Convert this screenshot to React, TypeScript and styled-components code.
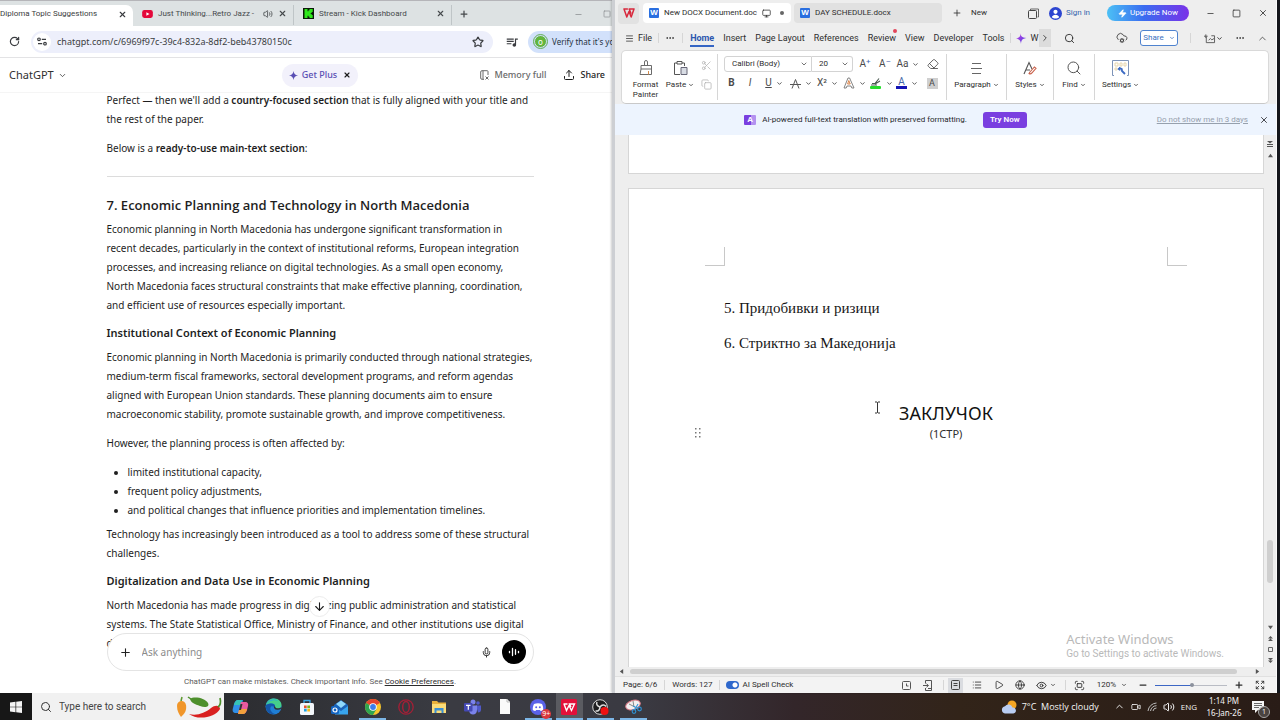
import React from "react";
import styled, { createGlobalStyle, css } from "styled-components";
import { MdQueueMusic } from "react-icons/md";
import {
  RotateCw, X, Plus, Star, Volume2, Minus, Square, ChevronDown, ChevronRight, ChevronUp,
  Upload, Mic, ArrowDown, Menu, Search, Monitor, Scissors, Copy, Eraser, Play, Globe, Eye, List,
  Fullscreen, Expand, Ellipsis, CloudCog, Zap, Video,
} from "lucide-react";

const Global = createGlobalStyle`
  *, *::before, *::after { box-sizing: border-box; }
  body { margin: 0; font: 10px/14px "Noto Sans", "Open Sans", sans-serif; color: #1c1c1c; background: #14161b; }
  button, input, select { font: inherit; color: inherit; margin: 0; padding: 0; border: 0; background: none; }
  button { display: inline-flex; align-items: center; justify-content: center; flex: none; white-space: nowrap; }
  p, h1, h2, h3, ul { margin: 0; padding: 0; }
  svg { display: block; flex: none; }
`;

const Screen = styled.div`
  display: flex;
  flex-direction: column;
  height: 100vh;
  overflow: hidden;
`;
const Workspace = styled.div`
  display: flex;
  flex: 1;
  min-height: 0;
`;

/* ---------- browser ---------- */
const Browser = styled.section`
  display: flex;
  flex-direction: column;
  flex: 0 0 50%;
  min-width: 0;
  background: #fff;
`;
const TabStrip = styled.div`
  display: flex;
  align-items: stretch;
  height: 26px;
  padding-top: 4px;
  background: #dde2e3;
  border-top: 1px solid #b5b5b9;
  color: #46494c;
`;
const BrowserTab = styled.div<{ $width: number; $active?: boolean }>`
  display: flex;
  align-items: center;
  gap: 5px;
  width: ${(p) => p.$width}px;
  padding: 0 6px 3px ${(p) => (p.$active ? 0 : 9)}px;
  ${(p) =>
    p.$active
      ? css`background: #fff; border-radius: 0 7px 0 0; color: #3a3c40;`
      : css`border-right: 1px solid #bfc5c7; height: 20px; align-self: flex-start;`}
`;
const TabTitle = styled.span`
  flex: 1;
  font-family: Roboto, sans-serif;
  font-size: 8px;
  white-space: nowrap;
`;
const WindowButtons = styled.div`
  display: flex;
  gap: 20px;
  align-items: center;
  margin-left: auto;
  padding: 0 29px 3px 0;
  color: #8a8d90;
`;
const StripButton = styled.button`
  width: 24px;
  padding-bottom: 3px;
`;
const Toolbar = styled.div`
  display: flex;
  align-items: center;
  height: 32px;
  padding-left: 9px;
  border-bottom: 1px solid #e3e3e5;
  color: #3b3d41;
`;
const Omnibox = styled.label`
  display: flex;
  align-items: center;
  gap: 6px;
  flex: 1;
  height: 22px;
  margin: 0 12px 0 11px;
  padding: 0 9px 0 2px;
  border-radius: 11px;
  background: #edeffb;
  font-size: 9px;
  input { flex: 1; min-width: 0; outline: 0; }
`;
const SiteInfo = styled.span`
  display: grid;
  place-items: center;
  width: 18px;
  height: 18px;
  border-radius: 50%;
  background: #fff;
`;
const Verify = styled.button`
  justify-content: flex-start;
  gap: 5px;
  width: 112px;
  height: 22px;
  margin-left: 9px;
  padding-left: 6px;
  border-radius: 11px 0 0 11px;
  background: #d2e1fb;
  font-size: 8px;
  color: #26313f;
`;
const Avatar = styled.span`
  display: grid;
  place-items: center;
  width: 13px;
  height: 13px;
  border: 1px solid #d2e1fb;
  outline: 1px solid #62ae57;
  border-radius: 50%;
  background: #62b53d;
  color: #fff;
  font-size: 8px;
  line-height: 8px;
`;

const ChatHeader = styled.header`
  display: grid;
  grid-template-columns: 1fr auto 1fr;
  align-items: center;
  height: 35px;
  padding: 0 9px;
  border-bottom: 1px solid #f5f5f5;
`;
const ModelButton = styled.button`
  gap: 4px;
  font-size: 11px;
  color: #303030;
`;
const HeaderSide = styled.div<{ $end?: boolean }>`
  display: flex;
  justify-content: ${(p) => (p.$end ? "flex-end" : "flex-start")};
  padding-right: ${(p) => (p.$end ? 26 : 0)}px;
  gap: 17px;
`;
const PlusPill = styled.button`
  gap: 4px;
  height: 23px;
  padding: 0 7px;
  border-radius: 12px;
  background: #f2f1fb;
  color: #5a4fb4;
  font-size: 9px;
  font-weight: 500;
  svg:last-child { color: #1d1d1d; margin-left: 2px; }
`;
const HeaderAction = styled.button<{ $strong?: boolean }>`
  gap: 5px;
  font-size: 9px;
  font-weight: 500;
  color: ${(p) => (p.$strong ? "#1c1c1c" : "#6a6a6a")};
`;

const Conversation = styled.main`
  position: relative;
  flex: 1;
  min-height: 0;
  overflow: hidden;
`;
const Article = styled.article`
  width: 427px;
  margin: -2px auto 0;
  line-height: 19px;
  color: #1e1e1e;
  p { white-space: nowrap; }
  b { font-weight: 600; }
`;
const Para = styled.p<{ $gap?: number }>`
  margin-bottom: ${(p) => p.$gap ?? 10}px;
`;
const Rule = styled.hr`
  margin: 18px 0;
  border: 0;
  border-top: 1px solid #dcdcdc;
`;
const Heading = styled.h2`
  font-family: "Open Sans", sans-serif;
  font-size: 13px;
  line-height: 20px;
  font-weight: 600;
  margin-bottom: 5px;
`;
const SubHeading = styled.h3`
  font-size: 11px;
  line-height: 20px;
  font-weight: 600;
  margin-bottom: 5px;
`;
const Bullets = styled.ul`
  padding-left: 21px;
  margin-bottom: 5px;
`;
const ScrollDown = styled.button`
  position: absolute;
  left: 50%;
  bottom: 32px;
  width: 21px;
  height: 21px;
  margin-left: -11px;
  border-radius: 50%;
  border: 1px solid #ececec;
  background: #fff;
`;
const Dock = styled.footer`
  position: relative;
  display: flex;
  flex-direction: column;
  align-items: center;
  margin-top: -16px;
  background: linear-gradient(transparent 16px, #fff 16px);
  font-family: Roboto, sans-serif;
  font-size: 8px;
  color: #5c5c5c;
  a { color: #2b2b2b; }
  p { padding: 4px 0; }
`;
const Composer = styled.label`
  display: flex;
  align-items: center;
  gap: 10px;
  width: 427px;
  height: 38px;
  padding: 0 7px 0 11px;
  border: 1px solid #e4e4e4;
  border-radius: 19px;
  background: #fff;
  color: #222;
  font-family: "Noto Sans", sans-serif;
  font-size: 10px;
  input { flex: 1; min-width: 0; outline: 0; }
  input::placeholder { color: #8b8b8b; opacity: 1; }
`;
const VoiceButton = styled.button`
  width: 24px;
  height: 24px;
  border-radius: 50%;
  background: #000;
  color: #fff;
`;

/* ---------- word processor ---------- */
const Writer = styled.section`
  position: relative;
  display: flex;
  flex-direction: column;
  flex: 1;
  min-width: 0;
  margin: 0 3px 0 -28px;
  background: #eeeeee;
  border-left: 3px solid #cdcfd3;
  border-right: 1px solid #fafafa;
  box-shadow: -1px 0 2px #0003;
  font-family: Roboto, sans-serif;
  font-size: 8px;
  color: #2e2e2e;
`;
const TitleBar = styled.div`
  display: flex;
  align-items: center;
  height: 26px;
  padding: 0 8px 0 3px;
`;
const LogoTab = styled.button`
  width: 21px;
  height: 21px;
  margin-right: 4px;
  border-radius: 4px;
  background: #e2e2e2;
`;
const DocTab = styled.button<{ $active?: boolean }>`
  justify-content: flex-start;
  gap: 5px;
  width: 148px;
  height: 20px;
  margin-right: 3px;
  padding: 0 8px 0 6px;
  border-radius: 4px;
  background: ${(p) => (p.$active ? "#fff" : "#e1e1e1")};
  svg { margin-left: auto; }
`;
const Dot = styled.i`
  flex: none;
  width: 4px;
  height: 4px;
  margin-left: 4px;
  border-radius: 50%;
  background: #666;
`;
const NewButton = styled.button`
  gap: 9px;
  margin-left: 7px;
`;
const WordMark = styled.i`
  display: grid;
  place-items: center;
  flex: none;
  width: 10px;
  height: 10px;
  border-radius: 1px;
  background: #2a6fe0;
  color: #fff;
  font: bold 8px/10px "Liberation Sans", sans-serif;
`;
const Push = styled.div<{ $gap: number }>`
  display: flex;
  align-items: center;
  gap: ${(p) => p.$gap}px;
  margin-left: auto;
`;
const SignIn = styled.button`
  gap: 4px;
  color: #3565ad;
`;
const Upgrade = styled.button`
  gap: 3px;
  width: 82px;
  height: 16px;
  border-radius: 8px;
  background: linear-gradient(90deg, #4cc0f5, #3a6cf0 45%, #7a32e8);
  color: #fff;
`;
const MenuBar = styled.nav`
  display: flex;
  align-items: center;
  height: 24px;
  padding: 0 8px 0 10px;
  font-size: 9px;
`;
const MenuItem = styled.button<{ $active?: boolean; $lead?: number }>`
  position: relative;
  height: 17px;
  margin-left: ${(p) => p.$lead ?? 9}px;
  gap: 4px;
  ${(p) =>
    p.$active &&
    css`
      color: #2c57ae;
      font-weight: 700;
      box-shadow: inset 0 -2px #3565c4;
    `}
`;
const Notice = styled.i`
  position: absolute;
  top: -1px;
  right: -1px;
  width: 4px;
  height: 4px;
  border-radius: 50%;
  background: #e2455a;
`;
const Divider = styled.i<{ $h?: number; $m?: number }>`
  flex: none;
  width: 1px;
  height: ${(p) => p.$h ?? 10}px;
  margin: 0 ${(p) => p.$m ?? 0}px;
  background: #d6d6d6;
`;
const MoreTabs = styled.button`
  width: 12px;
  height: 18px;
  margin-right: 13px;
  background: #dcdcdc;
`;
const ShareButton = styled.button`
  gap: 5px;
  width: 38px;
  height: 16px;
  border: 1px solid #4f83cf;
  border-radius: 3px;
  background: #fff;
  color: #3b71c0;
  font-size: 8px;
`;
const Ribbon = styled.div`
  display: flex;
  height: 54px;
  margin: 0 7px 0 6px;
  padding: 3px 4px;
  border: 1px solid #d9d9d9;
  border-bottom-color: #c9c9c9;
  border-radius: 5px;
  background: #fff;
`;
const BigTool = styled.button<{ $w: number }>`
  flex-direction: column;
  justify-content: flex-start;
  width: ${(p) => p.$w}px;
  padding-top: 6px;
  gap: 4px;
  line-height: 10px;
  span { display: flex; align-items: center; gap: 2px; }
`;
const ToolStack = styled.div`
  display: flex;
  flex-direction: column;
  gap: 8px;
  width: 22px;
  padding: 6px 3px 0;
  color: #b0b0b0;
`;
const FontGroup = styled.div`
  display: flex;
  flex-direction: column;
  gap: 3px;
  padding: 2px 0 0 6px;
  width: 228px;
`;
const ToolRow = styled.div`
  display: flex;
  align-items: center;
  height: 16px;
`;
const Picker = styled.label<{ $w: number; $last?: boolean }>`
  display: flex;
  align-items: center;
  width: ${(p) => p.$w}px;
  height: 16px;
  padding: 0 3px 0 7px;
  border: 1px solid #d3d3d3;
  ${(p) => (p.$last ? css`border-left: 0; border-radius: 0 3px 3px 0; margin-right: 2px;` : css`border-radius: 3px 0 0 3px;`)}
  font-size: 8px;
  select { flex: 1; min-width: 0; appearance: none; outline: 0; }
`;
const Tool = styled.button<{ $w: number; $tight?: boolean }>`
  gap: ${(p) => (p.$tight ? 0 : 4)}px;
  width: ${(p) => p.$w}px;
  font-size: 10px;
  line-height: 12px;
  color: #4a4a4a;
  sup { align-self: flex-start; font-size: 8px; line-height: 8px; color: #3f66b0; }
`;
const Inked = styled.span<{ $ink: string }>`
  display: grid;
  place-items: center;
  width: 11px;
  height: 12px;
  line-height: 8px;
  border-bottom: 3px solid ${(p) => p.$ink};
  color: #4667a8;
`;
const Shade = styled.span`
  width: 11px;
  height: 11px;
  line-height: 11px;
  font-size: 9px;
  background: #cfcfcf;
`;
const Banner = styled.div`
  display: flex;
  align-items: center;
  justify-content: center;
  position: relative;
  height: 31px;
  padding-right: 120px;
  background: #edf4fe;
  font-size: 8px;
  color: #26282c;
`;
const TryNow = styled.button`
  width: 44px;
  height: 16px;
  margin-left: 16px;
  border-radius: 3px;
  background: #7a3fe0;
  color: #fff;
  font-weight: 600;
`;
const BannerEnd = styled.div`
  position: absolute;
  right: 7px;
  display: flex;
  align-items: center;
  gap: 11px;
  a { color: #96a0ad; }
`;
const AiMark = styled.i`
  display: grid;
  place-items: center;
  width: 12px;
  height: 10px;
  margin-right: 6px;
  border-radius: 1px;
  background: linear-gradient(90deg, #7a3fe0 60%, #b392f0 60%);
  color: #fff;
  font: bold 8px/10px "Liberation Sans", sans-serif;
`;
const DocArea = styled.div`
  display: flex;
  flex: 1;
  min-height: 0;
`;
const Pages = styled.div`
  position: relative;
  display: flex;
  flex-direction: column;
  gap: 14px;
  flex: 1;
  min-width: 0;
  padding-left: 13px;
`;
const Sheet = styled.div<{ $tail?: boolean }>`
  position: relative;
  background: #fff;
  border: 1px solid #d6d6d6;
  font-family: "Noto Sans", sans-serif;
  ${(p) => (p.$tail ? css`height: 39px; border-top: 0;` : css`flex: 1; border-bottom: 0;`)}
`;
const Corners = styled.div`
  display: flex;
  justify-content: space-between;
  padding: 58px 76px 0;
`;
const Corner = styled.i<{ $side: "left" | "right" }>`
  width: 20px;
  height: 19px;
  border-bottom: 1px solid #c8c8c8;
  border-${(p) => (p.$side === "left" ? "right" : "left")}: 1px solid #c8c8c8;
`;
const DocLine = styled.p`
  padding-left: 95px;
  margin-bottom: 15px;
  font: 15px/20px "Liberation Serif", serif;
  color: #161616;
`;
const DocText = styled.div`
  padding-top: 32px;
`;
const DocTitle = styled.h1`
  margin-top: 46px;
  text-align: center;
  font-size: 18px;
  font-weight: 400;
  line-height: 28px;
  color: #111;
`;
const DocNote = styled.p`
  position: relative;
  text-align: center;
  font-size: 11px;
  line-height: 14px;
`;
const Handle = styled.span`
  position: absolute;
  left: 65px;
  top: 1px;
`;
const Caret = styled.span`
  position: absolute;
  left: 245px;
  top: 212px;
`;
const Watermark = styled.div`
  position: absolute;
  right: 40px;
  bottom: 6px;
  color: #b9b9b9;
  font-size: 10px;
  line-height: 14px;
  strong { display: block; font: 400 13px/16px "Noto Sans", sans-serif; }
`;
const Rail = styled.div`
  display: flex;
  flex-direction: column;
  align-items: center;
  justify-content: space-between;
  width: 12px;
  padding: 6px 0 4px;
  color: #555;
`;
const RailGroup = styled.div`
  display: flex;
  flex-direction: column;
  align-items: center;
  gap: 6px;
`;
const Thumb = styled.i`
  width: 6px;
  height: 43px;
  margin-bottom: 36px;
  border-radius: 3px;
  background: #cfcfcf;
`;
const HScroll = styled.div`
  display: flex;
  align-items: center;
  gap: 6px;
  height: 10px;
  padding: 0 16px 0 4px;
  border-bottom: 1px solid #e0e0e0;
  color: #555;
`;
const HThumb = styled.i`
  flex: 1;
  height: 5px;
  margin-right: 12px;
  border-radius: 3px;
  background: #cfcfcf;
`;
const StatusBar = styled.footer`
  display: flex;
  align-items: center;
  height: 16px;
  padding-left: 8px;
  background: #f3f3f3;
  font-size: 8px;
`;
const Switch = styled.label`
  display: flex;
  align-items: center;
  gap: 4px;
  input {
    appearance: none;
    width: 13px;
    height: 8px;
    border-radius: 4px;
    background: radial-gradient(circle at 9px 4px, #fff 2px, transparent 3px), #2f68cc;
  }
`;
const ViewButton = styled.button<{ $on?: boolean; $w?: number }>`
  gap: 3px;
  width: ${(p) => p.$w ?? 22}px;
  height: 15px;
  background: ${(p) => (p.$on ? "#dadce0" : "none")};
`;
const ZoomRange = styled.input`
  appearance: none;
  width: 72px;
  height: 10px;
  margin: 0 7px;
  background: linear-gradient(90deg, #3c66c4 52%, #b9bcc4 52%) center / 100% 1px no-repeat;
  &::-webkit-slider-thumb { appearance: none; width: 4px; height: 4px; border-radius: 50%; background: #8c919c; }
`;

/* ---------- taskbar ---------- */
const Taskbar = styled.footer`
  display: flex;
  align-items: stretch;
  height: 27px;
  background: linear-gradient(90deg, #1d1d1f 0, #2c2d31 18%, #3a3b42 35%, #3a3a42 50%, #33262a 62%, #322419 75%, #291c17 100%);
  color: #f4f4f4;
`;
const Start = styled.button`
  width: 32px;
  background: #171717;
`;
const SearchBox = styled.label`
  display: flex;
  align-items: center;
  gap: 7px;
  width: 192px;
  padding: 0 1px 0 8px;
  background: #f1f1f1;
  color: #333;
  font-family: Roboto, sans-serif;
  font-size: 10px;
  input { flex: 1; min-width: 0; outline: 0; }
  input::placeholder { color: #444; opacity: 1; }
`;
const Apps = styled.div`
  display: flex;
  width: 426px;
`;
const AppButton = styled.button<{ $open?: boolean; $active?: boolean }>`
  flex: 1 1 0;
  border-top: 2px solid transparent;
  border-bottom: 2px solid ${(p) => (p.$open || p.$active ? "#7cb6e6" : "transparent")};
  background: ${(p) => (p.$active ? "#5a5b61" : "none")};
  margin: 0 ${(p) => (p.$active ? 1 : 3)}px;
`;
const Tray = styled.div`
  display: flex;
  align-items: center;
  margin-left: auto;
  padding-right: 16px;
  font-family: "Open Sans", sans-serif;
  font-size: 9px;
  line-height: 12px;
`;
const Weather = styled.button`
  gap: 5px;
  margin-right: 15px;
`;
const TrayIcons = styled.div`
  display: flex;
  align-items: center;
  gap: 6px;
  font-size: 8px;
`;
const ClockText = styled.div`
  width: 40px;
  margin: 0 8px 0 7px;
  text-align: center;
  white-space: nowrap;
  font-family: "Noto Sans", sans-serif;
  font-size: 8px;
`;
const Action = styled.span`
  position: relative;
`;
const Badge = styled.span<{ $red?: boolean }>`
  position: absolute;
  right: -5px;
  bottom: -4px;
  min-width: 10px;
  height: 10px;
  padding: 0 1px;
  border-radius: 5px;
  background: ${(p) => (p.$red ? "#d9363e" : "#4a4340")};
  outline: ${(p) => (p.$red ? 0 : 1)}px solid #aaa;
  color: #fff;
  font-size: 7px;
  line-height: 10px;
  text-align: center;
`;

const Down = ({ s = 7 }: { s?: number }) => <ChevronDown size={s} strokeWidth={3} />;

const WLogo = ({ size, color }: { size: number; color: string }) => (
  <svg width={size} height={size} viewBox="0 0 12 12" fill="none" stroke={color} strokeWidth="1.500" strokeLinejoin="round" strokeLinecap="round">
    <path d="M1 2h3.400M1 2l2.800 8L6 4.500 8.200 10 11 2H6.200l1.600 4" />
  </svg>
);
const Tri = ({ d }: { d: string }) => (
  <svg width="5" height="5" viewBox="0 0 6 6" fill="currentColor"><path d={d} /></svg>
);

const YouTube = () => (
  <svg width="11" height="8" viewBox="0 0 12 9"><rect width="12" height="9" rx="2.400" fill="#e4083a" /><path d="M4.700 2.400v4.200l3.600-2.100z" fill="#fff" /></svg>
);
const Kick = () => (
  <svg width="11" height="11" viewBox="0 0 11 11"><rect width="11" height="11" fill="#0b1a08" /><path d="M1.500 1h3v2.300h1V2.200h1V1h3.200v3h-1v1h-1v1h1v1h1v3H6.500v-1.200h-1V7.700h-1V10h-3z" fill="#2fe81c" /></svg>
);
const Tune = () => (
  <svg width="10" height="9" viewBox="0 0 10 9" fill="none" stroke="currentColor" strokeWidth="1.200"><circle cx="2" cy="2.300" r="1.300" /><path d="M4.800 2.300H9M1 6.700h4.200" /><circle cx="8" cy="6.700" r="1.300" /></svg>
);
const Sparkle = () => (
  <svg width="9" height="9" viewBox="0 0 10 10"><path d="M5 0c.5 3 1.500 4.300 5 5-3.500.7-4.500 2-5 5-.5-3-1.500-4.300-5-5 3.500-.7 4.500-2 5-5z" fill="#5a4fb4" /></svg>
);
const WandSpark = () => (
  <svg width="11" height="11" viewBox="0 0 11 11"><defs><linearGradient id="spark" x2="1" y2="1"><stop stopColor="#c246e0" /><stop offset="1" stopColor="#4a3ae6" /></linearGradient></defs><path d="M4.500 0c.3 3.200 1 4.500 6 5-4.200.6-5.300 2-5.500 6-.4-3.600-1.300-4.700-5-5.500 3.600-.7 4.500-2 4.500-5.500z" fill="url(#spark)" /></svg>
);
const Memory = () => (
  <svg width="9" height="10" viewBox="0 0 9 10" fill="none" stroke="currentColor" strokeWidth="1"><path d="M8 5V1.500a.8.8 0 0 0-.8-.8H2A1.300 1.300 0 0 0 .7 2v6A1.300 1.300 0 0 0 2 9.300h2M3 .7v8.400M5.500 6.500l3 3M8.500 6.500l-3 3" /></svg>
);
const Wave = () => (
  <svg width="12" height="12" viewBox="0 0 12 12" stroke="#fff" strokeWidth="1.300" strokeLinecap="round"><path d="M1.500 5.300v1.400M4.500 2.500v7M7.500 3.700v4.600M10.500 5.300v1.400" /></svg>
);
const Person = () => (
  <svg width="13" height="13" viewBox="0 0 13 13"><circle cx="6.500" cy="6.500" r="6.500" fill="#2d45d0" /><circle cx="6.500" cy="4.800" r="2.100" fill="#fff" /><path d="M2.800 10.200c.7-3.400 6.700-3.400 7.400 0-2 1.700-5.400 1.700-7.400 0z" fill="#fff" /></svg>
);
const TabStack = () => (
  <svg width="11" height="11" viewBox="0 0 11 11" fill="none"><path d="M2.500 2V1h8v8h-1" stroke="#666" /><rect x=".5" y="2.500" width="8" height="8" rx="1" stroke="#444" /></svg>
);
const Painter = () => (
  <svg width="14" height="16" viewBox="0 0 14 16" fill="none" stroke="#6b6b6b"><path d="M5.500 5V2a1.500 1.500 0 0 1 3 0v3M2 5.500h10.500V9H2zM2 9l-1 5.500h11.500V9" /><path d="M9.500 11v3.500" stroke="#d58b4a" /></svg>
);
const Clipboard_ = () => (
  <svg width="15" height="16" viewBox="0 0 15 16" fill="none" stroke="#555"><path d="M7 14.500H1.500V3H4M9 3h2.500v3M4 1.500h5V4H4z" /><path d="M8 7.500h6v7H8z" fill="#d8dce4" stroke="#667" /></svg>
);
const Lines = () => (
  <svg width="11" height="16" viewBox="0 0 11 16" stroke="#666"><path d="M1 3.500h9M0 8.500h11M1 13.500h9" /></svg>
);
const Styles_ = () => (
  <svg width="14" height="16" viewBox="0 0 14 16" fill="none" stroke="#555" strokeWidth="1.100"><path d="M1 14L6 2.500 9 9M2.800 10H7" /><path d="M6 13.500c1 .7 2 .5 3-.6l4-4.600-1.600-1.300-4 4.500c-.8.9-.9 1.400-1.400 2z" stroke="#c9614a" /></svg>
);
const SettingsArt = () => (
  <svg width="17" height="16" viewBox="0 0 17 16" fill="none"><path d="M2 15.500H.5V.5h16v15H15" stroke="#7d93b8" /><path d="M3 3h3v3H3zM8 3h2v3H8zM12 3h2v3h-2zM3 8h2v2H3z" stroke="#e6d6ae" /><path d="M6 8.500l1.500 1 .3-1.500 2 1 .2 2L13 14" stroke="#3d6bc4" strokeWidth="1.800" /></svg>
);
const Cam = () => (
  <svg width="13" height="11" viewBox="0 0 14 12" fill="none" stroke="#555"><path d="M3.500 4v6.500h9V3H9M1 3.500h4M3 1.500v4M6 8l2-2 1.500 1.500L12 6" /></svg>
);
const OutlineA = () => (
  <svg width="12" height="12" viewBox="0 0 12 12" fill="none"><path d="M1 11L5 1h1.600L11 11H8.800L8 9H4l-.8 2z" stroke="#777" strokeWidth=".9" /><path d="M5.800 3.500L4.600 7h2.600z" stroke="#d9834a" /></svg>
);
const Strike = () => (
  <svg width="11" height="11" viewBox="0 0 11 11" fill="none" stroke="#555"><path d="M2 10.500L5.500 1.500 9 10.500M0 6.500h11" /></svg>
);
const Marker = () => (
  <svg width="12" height="12" viewBox="0 0 12 12" fill="none"><path d="M2 6.500h3l4-5M5 7l5-3M1 8h6" stroke="#4b5a52" strokeWidth="1.100" /><rect x="0" y="9" width="11" height="3" rx="1" fill="#25dc2c" /></svg>
);
const BackupIcon = () => (
  <svg width="9" height="9" viewBox="0 0 9 9" fill="none" stroke="#555"><rect x=".5" y=".5" width="8" height="8" rx="1" /><path d="M4.500 2.500v2.500h2" /></svg>
);
const SideIcon = () => (
  <svg width="10" height="11" viewBox="0 0 10 11" fill="none" stroke="#555"><path d="M2.500 3.500v-3h6v10h-6V8M0 5.500h5M3.500 3.800l2 1.700-2 1.700M5 8.500h3" /></svg>
);
const PageIcon = () => (
  <svg width="9" height="10" viewBox="0 0 9 10" fill="none" stroke="#444"><rect x=".5" y=".5" width="8" height="9" rx="1" /><path d="M2.500 3.500h4M2.500 5.500h4" /></svg>
);
const Peppers = () => (
  <svg width="48" height="24" viewBox="0 0 48 24">
    <path d="M6 6l1-4" stroke="#5f9a30" strokeWidth="1.500" /><path d="M2 11c0-6 8-7 9-1s-2 9-5 12C4 19 2 16 2 11z" fill="#f0962a" />
    <path d="M15 4c4-3 15-1 18 4 2 4-3 5-8 3S16 8 15 4z" fill="#4d8f2c" /><path d="M16 4l-3-2" stroke="#4d8f2c" strokeWidth="1.500" />
    <path d="M14 19c8 2 16-1 22-6 5-4 9-2 9 1-4 8-22 12-31 5z" fill="#d92020" /><path d="M43 12c3-2 3-5 2-9" stroke="#4d8f2c" strokeWidth="1.700" fill="none" />
  </svg>
);

const icons: Record<string, React.ReactNode> = {
  Copilot: <svg width="17" height="16" viewBox="0 0 17 16"><path d="M6 1h5l-3 13H4c-3 0-4-2-3-5l1-4c.6-2 2-4 4-4z" fill="#2f8fe8" /><path d="M6 1h4L8.500 6H2c.7-3 2-5 4-5z" fill="#36c2b4" /><path d="M11 15H6l3-12h4c3 0 3.500 2 3 4l-1 4c-.6 2-2 4-4 4z" fill="#e85aa0" /><path d="M11 15H6l1.200-5H15c-.6 3-2 5-4 5z" fill="#f2a13c" /><path d="M8.500 5h2L9 11H7z" fill="#333" /></svg>,
  Edge: <svg width="17" height="17" viewBox="0 0 17 17"><circle cx="8.500" cy="8.500" r="8" fill="#1f7fd6" /><path d="M1 7C2 2 6 .5 9 .5c5 0 7.500 3.500 7.500 6.500S14 11 11.500 11 9.500 9 10 8.500C10.500 6 7 4 1 7z" fill="#45cf8b" /><path d="M1 7C3 2 10 0 13 3 8 1 3 4 1 7z" fill="#2aa9d8" /><path d="M1 7c6-3 9.500-1 9 1.500-1 1-3.500-1.500-4.500 1S7 15 10 16C4 17 0 13 1 7z" fill="#1557a8" /><path d="M9.700 8.500c-.4.700.3 2.500 2.300 2.500 1.500.2 3-.3 4-1" fill="none" stroke="#2e3035" strokeWidth="1.400" /></svg>,
  Store: <svg width="16" height="16" viewBox="0 0 16 16"><path d="M5 4V1.500h6V4" fill="none" stroke="#3aa7e4" strokeWidth="1.300" /><rect x="1" y="4" width="14" height="12" rx="1.500" fill="#f3f6fa" /><path d="M5 6.500h2.700v2.700H5z" fill="#e8532f" /><path d="M8.300 6.500H11v2.700H8.300z" fill="#79b51c" /><path d="M5 9.800h2.700v2.700H5z" fill="#1ba1e2" /><path d="M8.300 9.800H11v2.700H8.300z" fill="#f8b916" /></svg>,
  Outlook: <svg width="17" height="16" viewBox="0 0 17 16"><path d="M3 6l7-5 7 5v9H3z" fill="#1b62b8" /><path d="M5 5l5-3.500L15 5l-5 4z" fill="#8fd8fa" /><path d="M3 8l7 4 7-5v8.500H4z" fill="#38a5ee" /><rect y="7" width="8" height="8" rx="1.500" fill="#1464c0" /><circle cx="4" cy="11" r="2" fill="none" stroke="#fff" strokeWidth="1.200" /></svg>,
  Chrome: <svg width="16" height="16" viewBox="0 0 16 16"><circle cx="8" cy="8" r="8" fill="#f7c52c" /><path d="M8 8L1.100 4A8 8 0 0 1 14.900 4z" fill="#e4432f" /><path d="M8 8L1.100 4A8 8 0 0 0 8 16l3.500-6z" fill="#2fa550" /><circle cx="8" cy="8" r="3.800" fill="#fff" /><circle cx="8" cy="8" r="2.900" fill="#3b7ded" /></svg>,
  Opera: <svg width="16" height="16" viewBox="0 0 16 16" fill="none" stroke="#a31f36"><circle cx="8" cy="8" r="7.200" strokeWidth="1.300" /><ellipse cx="8" cy="8" rx="3.300" ry="5.500" strokeWidth="1.500" /></svg>,
  Explorer: <svg width="16" height="14" viewBox="0 0 16 14"><path d="M1 1h5l1.500 1.500H15V13H1z" fill="#e9b13c" /><path d="M1 4h14v9H1z" fill="#fbdc78" /><path d="M3.500 8h9v5h-2v-2.500h-5V13h-2z" fill="#3b8fd4" /></svg>,
  Teams: <svg width="17" height="16" viewBox="0 0 17 16"><circle cx="9" cy="3" r="2.500" fill="#7b83eb" /><circle cx="14" cy="4" r="1.800" fill="#5059c9" /><path d="M12 6.500h5v4c0 2-1 3-3 3z" fill="#5059c9" /><path d="M5 6.500h8V11c0 3-2 4.500-4 4.500S5 14 5 11z" fill="#7b83eb" /><rect y="4" width="8.500" height="8.500" rx="1" fill="#4449b4" /><path d="M2 6.300h4.500M4.300 6.300v4.500" stroke="#fff" strokeWidth="1.200" /></svg>,
  File: <svg width="12" height="15" viewBox="0 0 12 15"><path d="M1 0h7l3 3v12H1z" fill="#fafafa" /><path d="M8 0v3h3" fill="none" stroke="#bbb" /></svg>,
  Discord: <svg width="16" height="16" viewBox="0 0 16 16"><circle cx="8" cy="8" r="8" fill="#5a62e8" /><path d="M4 5c2.500-1 5.500-1 8 0 1 2 1.400 4 1.200 6-1 .7-1.700 1-2.600 1l-.7-1H6.100l-.7 1c-1 0-1.700-.3-2.600-1C2.600 9 3 7 4 5z" fill="#fff" /><circle cx="6.200" cy="8.200" r="1" fill="#5a62e8" /><circle cx="9.800" cy="8.200" r="1" fill="#5a62e8" /></svg>,
  "WPS Office": <svg width="16" height="16" viewBox="0 0 16 16"><rect width="16" height="16" rx="1.500" fill="#e2103a" /><path d="M2.500 5h4M3 5l2.500 6.500L8 6.500l2.500 5L13.500 5H8.500l1.500 3" fill="none" stroke="#fff" strokeWidth="1.400" /></svg>,
  "OBS Studio": <svg width="17" height="16" viewBox="0 0 17 16"><circle cx="8" cy="8" r="7.300" fill="#1e1e20" stroke="#d8d8d8" /><path d="M8 8c-3-1-4-3-3-5M8 8c0 3-2 4.500-4.500 4M8 8c2-2.500 4.500-2.500 6-.5" fill="none" stroke="#ddd" strokeWidth="1.500" /><circle cx="12.500" cy="12" r="4" fill="#ee1111" /></svg>,
  "Snipping Tool": <svg width="17" height="15" viewBox="0 0 17 15"><ellipse cx="8" cy="6" rx="7.500" ry="4.500" transform="rotate(-18 8 6)" fill="#f4f0f0" stroke="#d77a86" /><path d="M4 5l6 3M8 2l1 6" stroke="#888" /><circle cx="9" cy="12.500" r="1.800" fill="none" stroke="#2f8fd0" strokeWidth="1.200" /><circle cx="14.500" cy="10" r="1.800" fill="none" stroke="#2f8fd0" strokeWidth="1.200" /><path d="M9.500 11L13 5M13 9.500L8 7" stroke="#3b99d8" strokeWidth="1.200" /></svg>,
};
const openApps = ["Chrome", "Discord", "OBS Studio", "Snipping Tool"];

function BrowserWindow() {
  return (
    <Browser>
      <TabStrip>
        <BrowserTab $width={133} $active>
          <TabTitle>Diploma Topic Suggestions</TabTitle>
          <button aria-label="Close tab"><X size={9} strokeWidth={3} /></button>
        </BrowserTab>
        <BrowserTab $width={161}>
          <YouTube />
          <TabTitle>Just Thinking...Retro Jazz -</TabTitle>
          <Volume2 size={10} />
          <button aria-label="Close tab"><X size={9} strokeWidth={3} /></button>
        </BrowserTab>
        <BrowserTab $width={158}>
          <Kick />
          <TabTitle>Stream - Kick Dashboard</TabTitle>
          <button aria-label="Close tab"><X size={9} strokeWidth={3} /></button>
        </BrowserTab>
        <StripButton aria-label="New tab"><Plus size={10} strokeWidth={3} /></StripButton>
        <WindowButtons>
          <button aria-label="Minimize"><Minus size={9} /></button>
          <button aria-label="Maximize"><Square size={8} /></button>
        </WindowButtons>
      </TabStrip>
      <Toolbar>
        <button aria-label="Reload"><RotateCw size={11} strokeWidth={2.600} /></button>
        <Omnibox>
          <SiteInfo><Tune /></SiteInfo>
          <input aria-label="Address" defaultValue="chatgpt.com/c/6969f97c-39c4-832a-8df2-beb43780150c" />
          <Star size={12} strokeWidth={2.400} />
        </Omnibox>
        <button aria-label="Media controls"><MdQueueMusic size={14} /></button>
        <Verify><Avatar>o</Avatar>Verify that it's you</Verify>
      </Toolbar>
      <ChatHeader>
        <HeaderSide>
          <ModelButton>ChatGPT <ChevronDown size={9} /></ModelButton>
        </HeaderSide>
        <PlusPill><Sparkle />Get Plus <X size={8} strokeWidth={3.500} /></PlusPill>
        <HeaderSide $end>
          <HeaderAction><Memory />Memory full</HeaderAction>
          <HeaderAction $strong><Upload size={12} />Share</HeaderAction>
        </HeaderSide>
      </ChatHeader>
      <Conversation>
        <Article>
          <Para>Perfect — then we'll add a <b>country-focused section</b> that is fully aligned with your title and<br />the rest of the paper.</Para>
          <Para>Below is a <b>ready-to-use main-text section</b>:</Para>
          <Rule />
          <Heading>7. Economic Planning and Technology in North Macedonia</Heading>
          <Para $gap={8}>Economic planning in North Macedonia has undergone significant transformation in<br />recent decades, particularly in the context of institutional reforms, European integration<br />processes, and increasing reliance on digital technologies. As a small open economy,<br />North Macedonia faces structural constraints that make effective planning, coordination,<br />and efficient use of resources especially important.</Para>
          <SubHeading>Institutional Context of Economic Planning</SubHeading>
          <Para>Economic planning in North Macedonia is primarily conducted through national strategies,<br />medium-term fiscal frameworks, sectoral development programs, and reform agendas<br />aligned with European Union standards. These planning documents aim to ensure<br />macroeconomic stability, promote sustainable growth, and improve competitiveness.</Para>
          <Para>However, the planning process is often affected by:</Para>
          <Bullets>
            <li>limited institutional capacity,</li>
            <li>frequent policy adjustments,</li>
            <li>and political changes that influence priorities and implementation timelines.</li>
          </Bullets>
          <Para $gap={8}>Technology has increasingly been introduced as a tool to address some of these structural<br />challenges.</Para>
          <SubHeading>Digitalization and Data Use in Economic Planning</SubHeading>
          <Para>North Macedonia has made progress in digitalizing public administration and statistical<br />systems. The State Statistical Office, Ministry of Finance, and other institutions use digital<br />databases</Para>
        </Article>
        <ScrollDown aria-label="Scroll to bottom"><ArrowDown size={13} /></ScrollDown>
      </Conversation>
      <Dock>
        <Composer>
          <Plus size={13} />
          <input aria-label="Message" placeholder="Ask anything" />
          <Mic size={11} />
          <VoiceButton aria-label="Voice mode"><Wave /></VoiceButton>
        </Composer>
        <p>ChatGPT can make mistakes. Check important info. See <a href="#cookies">Cookie Preferences</a>.</p>
      </Dock>
    </Browser>
  );
}

function WriterWindow() {
  return (
    <Writer>
      <TitleBar>
        <LogoTab aria-label="WPS home"><WLogo size={12} color="#d8283c" /></LogoTab>
        <DocTab $active><WordMark>W</WordMark><span>New DOCX Document.doc</span><Monitor size={9} /><Dot /></DocTab>
        <DocTab><WordMark>W</WordMark><span>DAY SCHEDULE.docx</span></DocTab>
        <NewButton><Plus size={10} />New</NewButton>
        <Push $gap={17}>
          <Push $gap={10}>
            <button aria-label="Windows"><TabStack /></button>
            <SignIn><Person />Sign in</SignIn>
          </Push>
          <Upgrade><Zap size={9} fill="#fff" />Upgrade Now</Upgrade>
          <button aria-label="Minimize"><Minus size={9} /></button>
          <button aria-label="Maximize"><Square size={9} /></button>
          <button aria-label="Close"><X size={10} /></button>
        </Push>
      </TitleBar>
      <MenuBar>
        <MenuItem $lead={0}><Menu size={9} />File</MenuItem>
        <Divider $m={6} />
        <MenuItem $lead={0} aria-label="Quick access"><Ellipsis size={10} /></MenuItem>
        <Divider $m={7} />
        <MenuItem $active $lead={0}>Home</MenuItem>
        <MenuItem>Insert</MenuItem>
        <MenuItem>Page Layout</MenuItem>
        <MenuItem>References</MenuItem>
        <MenuItem>Review<Notice /></MenuItem>
        <MenuItem>View</MenuItem>
        <MenuItem>Developer</MenuItem>
        <MenuItem>Tools</MenuItem>
        <Divider $m={5} />
        <MenuItem $lead={0}><WandSpark />W</MenuItem>
        <MoreTabs aria-label="More tabs"><ChevronRight size={10} /></MoreTabs>
        <button aria-label="Search"><Search size={11} /></button>
        <Push $gap={12}>
          <button aria-label="Cloud"><CloudCog size={12} strokeWidth={1.600} /></button>
          <ShareButton>Share <Down s={6} /></ShareButton>
          <Divider />
          <button aria-label="Capture"><Cam /><Down /></button>
          <button aria-label="More"><Ellipsis size={10} /></button>
          <button aria-label="Collapse ribbon"><ChevronUp size={11} strokeWidth={1.600} /></button>
        </Push>
      </MenuBar>
      <Ribbon>
        <BigTool $w={39}><Painter /><span>Format<br />Painter</span></BigTool>
        <BigTool $w={30}><Clipboard_ /><span>Paste <Down s={6} /></span></BigTool>
        <ToolStack>
          <button aria-label="Cut"><Scissors size={11} strokeWidth={1.600} /></button>
          <button aria-label="Copy"><Copy size={11} strokeWidth={1.600} /></button>
        </ToolStack>
        <Divider $h={46} />
        <FontGroup>
          <ToolRow>
            <Picker $w={88}><select aria-label="Font"><option>Calibri (Body)</option></select><ChevronDown size={8} /></Picker>
            <Picker $w={41} $last><select aria-label="Font size"><option>20</option></select><ChevronDown size={8} /></Picker>
            <Tool $w={20} $tight>A<sup>+</sup></Tool>
            <Tool $w={20} $tight>A<sup>–</sup></Tool>
            <Tool $w={26}>Aa<Down /></Tool>
            <Tool $w={24} aria-label="Clear formatting"><Eraser size={12} strokeWidth={1.700} /></Tool>
          </ToolRow>
          <ToolRow>
            <Tool $w={15}><b>B</b></Tool>
            <Tool $w={22}><em>I</em></Tool>
            <Tool $w={26}><u>U</u><Down /></Tool>
            <Tool $w={27} aria-label="Strikethrough"><Strike /><Down /></Tool>
            <Tool $w={27}>X²<Down /></Tool>
            <Tool $w={27} aria-label="Text effects"><OutlineA /><Down /></Tool>
            <Tool $w={26} aria-label="Highlight"><Marker /><Down /></Tool>
            <Tool $w={26}><Inked $ink="#1414b4">A</Inked><Down /></Tool>
            <Tool $w={24}><Shade>A</Shade></Tool>
          </ToolRow>
        </FontGroup>
        <Divider $h={46} />
        <BigTool $w={59}><Lines /><span>Paragraph <Down s={6} /></span></BigTool>
        <Divider $h={46} />
        <BigTool $w={46}><Styles_ /><span>Styles <Down s={6} /></span></BigTool>
        <Divider $h={46} />
        <BigTool $w={40}><Search size={16} strokeWidth={1.500} color="#555" /><span>Find <Down s={6} /></span></BigTool>
        <Divider $h={46} />
        <BigTool $w={51}><SettingsArt /><span>Settings <Down s={6} /></span></BigTool>
      </Ribbon>
      <Banner>
        <AiMark>A</AiMark>AI-powered full-text translation with preserved formatting.
        <TryNow>Try Now</TryNow>
        <BannerEnd><a href="#hide">Do not show me in 3 days</a><button aria-label="Close banner"><X size={10} /></button></BannerEnd>
      </Banner>
      <DocArea>
        <Pages>
          <Sheet $tail />
          <Sheet>
            <Corners><Corner $side="left" /><Corner $side="right" /></Corners>
            <DocText>
              <DocLine>5. Придобивки и ризици</DocLine>
              <DocLine>6. Стриктно за Македонија</DocLine>
              <DocTitle>ЗАКЛУЧОК</DocTitle>
              <DocNote>
                <Handle><svg width="7" height="10" viewBox="0 0 7 10" fill="#777"><path d="M1 0h1.500v1.500H1zM5 0h1.500v1.500H5zM1 4h1.500v1.500H1zM5 4h1.500v1.500H5zM1 8h1.500v1.500H1zM5 8h1.500v1.500H5z" /></svg></Handle>
                (1СТР)
              </DocNote>
            </DocText>
            <Caret><svg width="7" height="13" viewBox="0 0 7 13" stroke="#333" fill="none"><path d="M1 1h2l.5.5.5-.5h2M3.500 1.500v10M1 12h2l.5-.5.5.5h2" /></svg></Caret>
          </Sheet>
          <Watermark><strong>Activate Windows</strong>Go to Settings to activate Windows.</Watermark>
        </Pages>
        <Rail>
          <RailGroup>
            <svg width="6" height="6" viewBox="0 0 6 6" fill="currentColor"><path d="M0 0h6L3 2.500zM0 3h6v1H0zM0 5h6v1H0z" /></svg>
            <Tri d="M0 5l3-4 3 4z" />
          </RailGroup>
          <RailGroup>
            <Thumb />
            <Tri d="M0 1l3 4 3-4z" />
            <Tri d="M0 3l3-3 3 3zM0 6l3-3 3 3z" />
            <svg width="5" height="5" viewBox="0 0 5 5"><path d="M.5.5h4v4h-4z" fill="none" stroke="#666" /></svg>
            <Tri d="M0 0h6L3 3zM0 3h6L3 6z" />
          </RailGroup>
        </Rail>
      </DocArea>
      <HScroll><Tri d="M5 0v6L1 3z" /><HThumb /><Tri d="M1 0v6l4-3z" /></HScroll>
      <StatusBar>
        Page: 6/6<Divider $m={7} />Words: 127<Divider $m={6} />
        <Switch><input type="checkbox" defaultChecked />AI Spell Check</Switch>
        <Push $gap={0}>
          <ViewButton aria-label="History"><BackupIcon /></ViewButton>
          <ViewButton aria-label="Sidebar"><SideIcon /></ViewButton>
          <Divider $m={4} />
          <ViewButton $on $w={15} aria-label="Page view"><PageIcon /></ViewButton>
          <ViewButton $w={27} aria-label="Outline view"><List size={10} /></ViewButton>
          <ViewButton $w={18} aria-label="Reading view"><Play size={10} /></ViewButton>
          <ViewButton $w={24} aria-label="Web view"><Globe size={10} /></ViewButton>
          <ViewButton $w={27} aria-label="Eye care"><Eye size={11} /><Down s={6} /></ViewButton>
          <Divider $m={6} />
          <ViewButton $w={14} aria-label="Fit page"><Fullscreen size={11} /></ViewButton>
          <ViewButton $w={52}>120%&nbsp; <Down s={6} /></ViewButton>
          <button aria-label="Zoom out"><Minus size={10} strokeWidth={3} /></button>
          <ZoomRange type="range" aria-label="Zoom" defaultValue={52} />
          <button aria-label="Zoom in"><Plus size={10} strokeWidth={3} /></button>
          <ViewButton $w={32} aria-label="Full screen"><Expand size={10} /></ViewButton>
        </Push>
      </StatusBar>
    </Writer>
  );
}

export default function App() {
  return (
    <Screen>
      <Global />
      <Workspace>
        <BrowserWindow />
        <WriterWindow />
      </Workspace>
      <Taskbar>
        <Start aria-label="Start"><svg width="12" height="12" viewBox="0 0 12 12" fill="#f4f4f4"><path d="M0 1.600l5.500-.8v4.900H0zM6.200.7L12 0v5.700H6.200zM0 6.300h5.500v4.900L0 10.400zM6.200 6.300H12V12l-5.800-.8z" /></svg></Start>
        <SearchBox>
          <Search size={12} />
          <input aria-label="Search" placeholder="Type here to search" />
          <Peppers />
        </SearchBox>
        <Apps>
          {Object.keys(icons).map((name) => (
            <AppButton key={name} aria-label={name} $open={openApps.includes(name)} $active={name === "WPS Office"}>
              <Action>{icons[name]}{name === "Discord" && <Badge $red>9+</Badge>}</Action>
            </AppButton>
          ))}
        </Apps>
        <Tray>
          <Weather>
            <svg width="16" height="14" viewBox="0 0 16 14"><circle cx="11" cy="5" r="4.500" fill="#f5a623" /><path d="M4 13.500a3.700 3.700 0 0 1 0-7.300 4.200 4.200 0 0 1 7.500 1.300 3 3 0 0 1 .8 6z" fill="#b9cdf2" /></svg>
            7°C&nbsp; Mostly cloudy
          </Weather>
          <TrayIcons>
            <ChevronUp size={11} />
            <Video size={10} />
            <svg width="10" height="10" viewBox="0 0 10 10" fill="none" stroke="#bbb"><path d="M1 9A9 9 0 0 1 9.500 1M3.500 9A6 6 0 0 1 9.500 3.700M6 9a3.500 3.500 0 0 1 3.500-3" /></svg>
            <Volume2 size={12} />
            ENG
          </TrayIcons>
          <ClockText>1:14 PM<br />16-Jan-26</ClockText>
          <Action>
            <svg width="12" height="12" viewBox="0 0 12 12"><path d="M0 0h12v9H6l-3 3V9H0z" fill="#f5f5f5" /><path d="M2 2.500h8M2 4.500h8M2 6.500h5" stroke="#444" strokeWidth=".8" /></svg>
            <Badge>1</Badge>
          </Action>
        </Tray>
      </Taskbar>
    </Screen>
  );
}
